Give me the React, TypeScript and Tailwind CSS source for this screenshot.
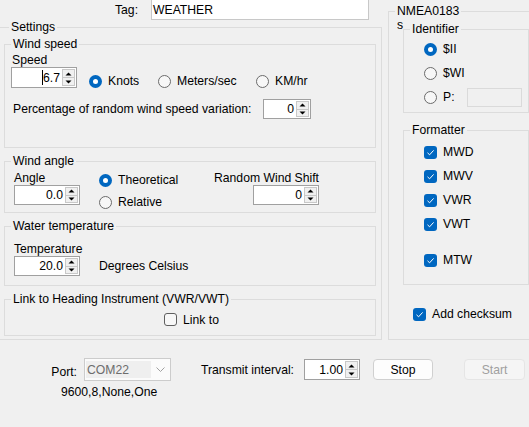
import React from "react";

function Arrow({ up }: { up: boolean }) {
  return (
    <svg width="7" height="4" viewBox="0 0 7 4">
      <path d={up ? "M0.5 3.5 L3.5 0.5 L6.5 3.5 Z" : "M0.5 0.5 L3.5 3.5 L6.5 0.5 Z"} fill="#000" />
    </svg>
  );
}

function Spin({ cls, value, caret }: { cls: string; value: string; caret?: boolean }) {
  return (
    <div className={`flex border border-[#a0a0a0] bg-white shrink-0 ${cls}`}>
      <div className="flex-1 flex items-center justify-end pr-[2px]">
        {caret && <span className="inline-block w-[1px] h-[15px] bg-black" />}
        <span>{value}</span>
      </div>
      <div className="w-[14px] flex flex-col py-[1px] pr-[1px]">
        <div className="flex-1 flex items-center justify-center bg-[#f0f0f0] border border-[#c8c8c8]">
          <Arrow up />
        </div>
        <div className="flex-1 flex items-center justify-center bg-[#f0f0f0] border border-t-0 border-[#c8c8c8]">
          <Arrow up={false} />
        </div>
      </div>
    </div>
  );
}

function RadioDot({ checked }: { checked?: boolean }) {
  return checked ? (
    <div className="w-[13px] h-[13px] rounded-full bg-[#0067c0] flex items-center justify-center shrink-0">
      <div className="w-[5px] h-[5px] rounded-full bg-white" />
    </div>
  ) : (
    <div className="w-[13px] h-[13px] rounded-full border border-[#6b6b6b] bg-[#f7f7f7] shrink-0" />
  );
}

function Radio({ checked, label, cls = "" }: { checked?: boolean; label: string; cls?: string }) {
  return (
    <div className={`flex items-center ${cls}`}>
      <RadioDot checked={checked} />
      <span className="ml-[6px] whitespace-nowrap">{label}</span>
    </div>
  );
}

function CheckBox({ checked }: { checked?: boolean }) {
  return checked ? (
    <div className="w-[13px] h-[13px] rounded-[3px] bg-[#0067c0] flex items-center justify-center shrink-0">
      <svg width="13" height="13" viewBox="0 0 13 13">
        <path d="M3.5 6.8 L5.6 8.8 L9.6 4.4" stroke="#ffffff" strokeWidth="1" fill="none" />
      </svg>
    </div>
  ) : (
    <div className="w-[13px] h-[13px] rounded-[3px] border border-[#5f5f5f] bg-[#f7f7f7] shrink-0" />
  );
}

function Check({ checked, label, cls = "" }: { checked?: boolean; label: string; cls?: string }) {
  return (
    <div className={`flex items-center ${cls}`}>
      <CheckBox checked={checked} />
      <span className="ml-[6px] whitespace-nowrap">{label}</span>
    </div>
  );
}

export default function App() {
  return (
    <div className="w-[529px] h-[427px] overflow-hidden bg-[#f0f0f0] text-black font-['Liberation_Sans',Arial,sans-serif] text-[12.2px] leading-[14px] flex flex-col">
      <div className="flex items-start">
        {/* Left column */}
        <div className="w-[382px] shrink-0 flex flex-col">
          <div className="h-[20px] flex items-center">
            <div className="w-[151px] pl-[115px]">Tag:</div>
            <div className="w-[218px] h-[20px] bg-white border-x border-b border-[#c8c8c8] flex items-center pl-[1px]">
              WEATHER
            </div>
          </div>
          <fieldset className="-ml-[1px] w-[383px] border border-[#dcdcdc] pl-[4px] pr-[5px] pb-[3px]">
            <legend className="ml-[5px] px-[2px] leading-[14px]">Settings</legend>

            {/* Wind speed */}
            <fieldset className="mt-[3px] w-[372px] border border-[#dcdcdc] pb-[28px]">
              <legend className="ml-[6px] px-[2px] leading-[14px]">Wind speed</legend>
              <div className="mt-[2px] ml-[7px]">Speed</div>
              <div className="flex items-start ml-[6px]">
                <Spin cls="w-[66px] h-[21px]" value="6.7" caret />
                <div className="mt-[7px] ml-[12px] flex">
                  <Radio checked label="Knots" cls="w-[69px]" />
                  <Radio label="Meters/sec" cls="w-[98px]" />
                  <Radio label="KM/hr" />
                </div>
              </div>
              <div className="mt-[11px] flex items-center">
                <div className="w-[258px] pl-[8px] whitespace-nowrap">Percentage of random wind speed variation:</div>
                <Spin cls="w-[48px] h-[20px]" value="0" />
              </div>
            </fieldset>

            {/* Wind angle */}
            <fieldset className="mt-[6px] w-[372px] border border-[#dcdcdc] pb-[7px]">
              <legend className="ml-[6px] px-[2px] leading-[14px]">Wind angle</legend>
              <div className="h-[37px] flex items-start">
                <div className="ml-[9px] mt-[3px] flex flex-col w-[66px]">
                  <div>Angle</div>
                  <Spin cls="w-[66px] h-[20px]" value="0.0" />
                </div>
                <div className="ml-[19px] mt-[5px] w-[115px] flex flex-col gap-[8px]">
                  <Radio checked label="Theoretical" cls="h-[14px]" />
                  <Radio label="Relative" cls="h-[14px]" />
                </div>
                <div className="mt-[3px] flex flex-col">
                  <div className="whitespace-nowrap">Random Wind Shift</div>
                  <div className="ml-[39px]">
                    <Spin cls="w-[66px] h-[20px]" value="0" />
                  </div>
                </div>
              </div>
            </fieldset>

            {/* Water temperature */}
            <fieldset className="mt-[6px] w-[372px] border border-[#dcdcdc] pb-[9px]">
              <legend className="ml-[6px] px-[2px] leading-[14px]">Water temperature</legend>
              <div className="mt-[9px] ml-[9px]">Temperature</div>
              <div className="flex items-center ml-[9px]">
                <Spin cls="w-[66px] h-[20px]" value="20.0" />
                <div className="ml-[19px]">Degrees Celsius</div>
              </div>
            </fieldset>

            {/* Link */}
            <fieldset className="mt-[6px] w-[372px] border border-[#dcdcdc] pb-[9px]">
              <legend className="ml-[6px] px-[2px] leading-[14px]">Link to Heading Instrument (VWR/VWT)</legend>
              <div className="mt-[7px] ml-[159px] h-[13px] flex items-center">
                <Check label="Link to" />
              </div>
            </fieldset>
          </fieldset>
        </div>

        {/* Right column */}
        <fieldset className="ml-[6px] mt-[4px] w-[146px] h-[336px] shrink-0 border border-[#dcdcdc]">
          <legend className="ml-[6px] px-[2px] leading-[14px]">NMEA0183</legend>
          <div className="flex pl-[8px]">
            <div className="w-[6px] shrink-0">s</div>
            <div className="flex flex-col">
              <fieldset className="mt-[4px] w-[126px] border border-[#dcdcdc] pb-[3px]">
                <legend className="ml-[6px] px-[2px] leading-[14px]">Identifier</legend>
                <div className="mt-[1px] pl-[20px] flex flex-col">
                  <Radio checked label="$II" cls="h-[24px]" />
                  <Radio label="$WI" cls="h-[24px]" />
                  <div className="h-[24px] flex items-center">
                    <RadioDot />
                    <span className="ml-[6px] w-[24px]">P:</span>
                    <div className="w-[55px] h-[19px] border border-[#dadada] bg-[#f0f0f0]" />
                  </div>
                </div>
              </fieldset>
              <fieldset className="mt-[10px] w-[126px] border border-[#dcdcdc] pb-[12px]">
                <legend className="ml-[6px] px-[2px] leading-[14px]">Formatter</legend>
                <div className="mt-[3px] pl-[20px] flex flex-col">
                  <Check checked label="MWD" cls="h-[24px]" />
                  <Check checked label="MWV" cls="h-[24px]" />
                  <Check checked label="VWR" cls="h-[24px]" />
                  <Check checked label="VWT" cls="h-[24px]" />
                  <Check checked label="MTW" cls="h-[24px] mt-[12px]" />
                </div>
              </fieldset>
              <div className="mt-[17px] ml-[10px] h-[24px] flex items-center">
                <Check checked label="Add checksum" />
              </div>
            </div>
          </div>
        </fieldset>
      </div>

      {/* Bottom */}
      <div className="pt-[18px] flex flex-col">
        <div className="flex items-start">
          <div className="w-[84px] mt-[7px] pr-[7px] text-right shrink-0">Port:</div>
          <div className="w-[87px] h-[23px] shrink-0 border border-[#cccccc] bg-[#fbfbfb] flex items-center pl-[1px]">
            <div className="w-[65px] h-[17px] bg-[#efefef] text-[#6d6d6d] flex items-center pl-[1px]">COM22</div>
            <div className="flex-1 flex justify-center">
              <svg width="9" height="5" viewBox="0 0 9 5">
                <path d="M0.5 0.5 L4.5 4.5 L8.5 0.5" stroke="#a0a0a0" strokeWidth="1" fill="none" />
              </svg>
            </div>
          </div>
          <div className="w-[133px] mt-[5px] pl-[30px] shrink-0 whitespace-nowrap">Transmit interval:</div>
          <div className="mt-[1px]">
            <Spin cls="w-[56px] h-[21px]" value="1.00" />
          </div>
          <button className="ml-[13px] mt-[1px] w-[60px] h-[21px] shrink-0 rounded-[4px] border border-[#d0d0d0] bg-[#fdfdfd] flex items-center justify-center">
            Stop
          </button>
          <button className="ml-[31px] mt-[1px] w-[61px] h-[21px] shrink-0 rounded-[4px] border border-[#e5e5e5] bg-[#f5f5f5] text-[#a0a0a0] flex items-center justify-center">
            Start
          </button>
        </div>
        <div className="mt-[4px] pl-[61px]">9600,8,None,One</div>
      </div>
    </div>
  );
}
